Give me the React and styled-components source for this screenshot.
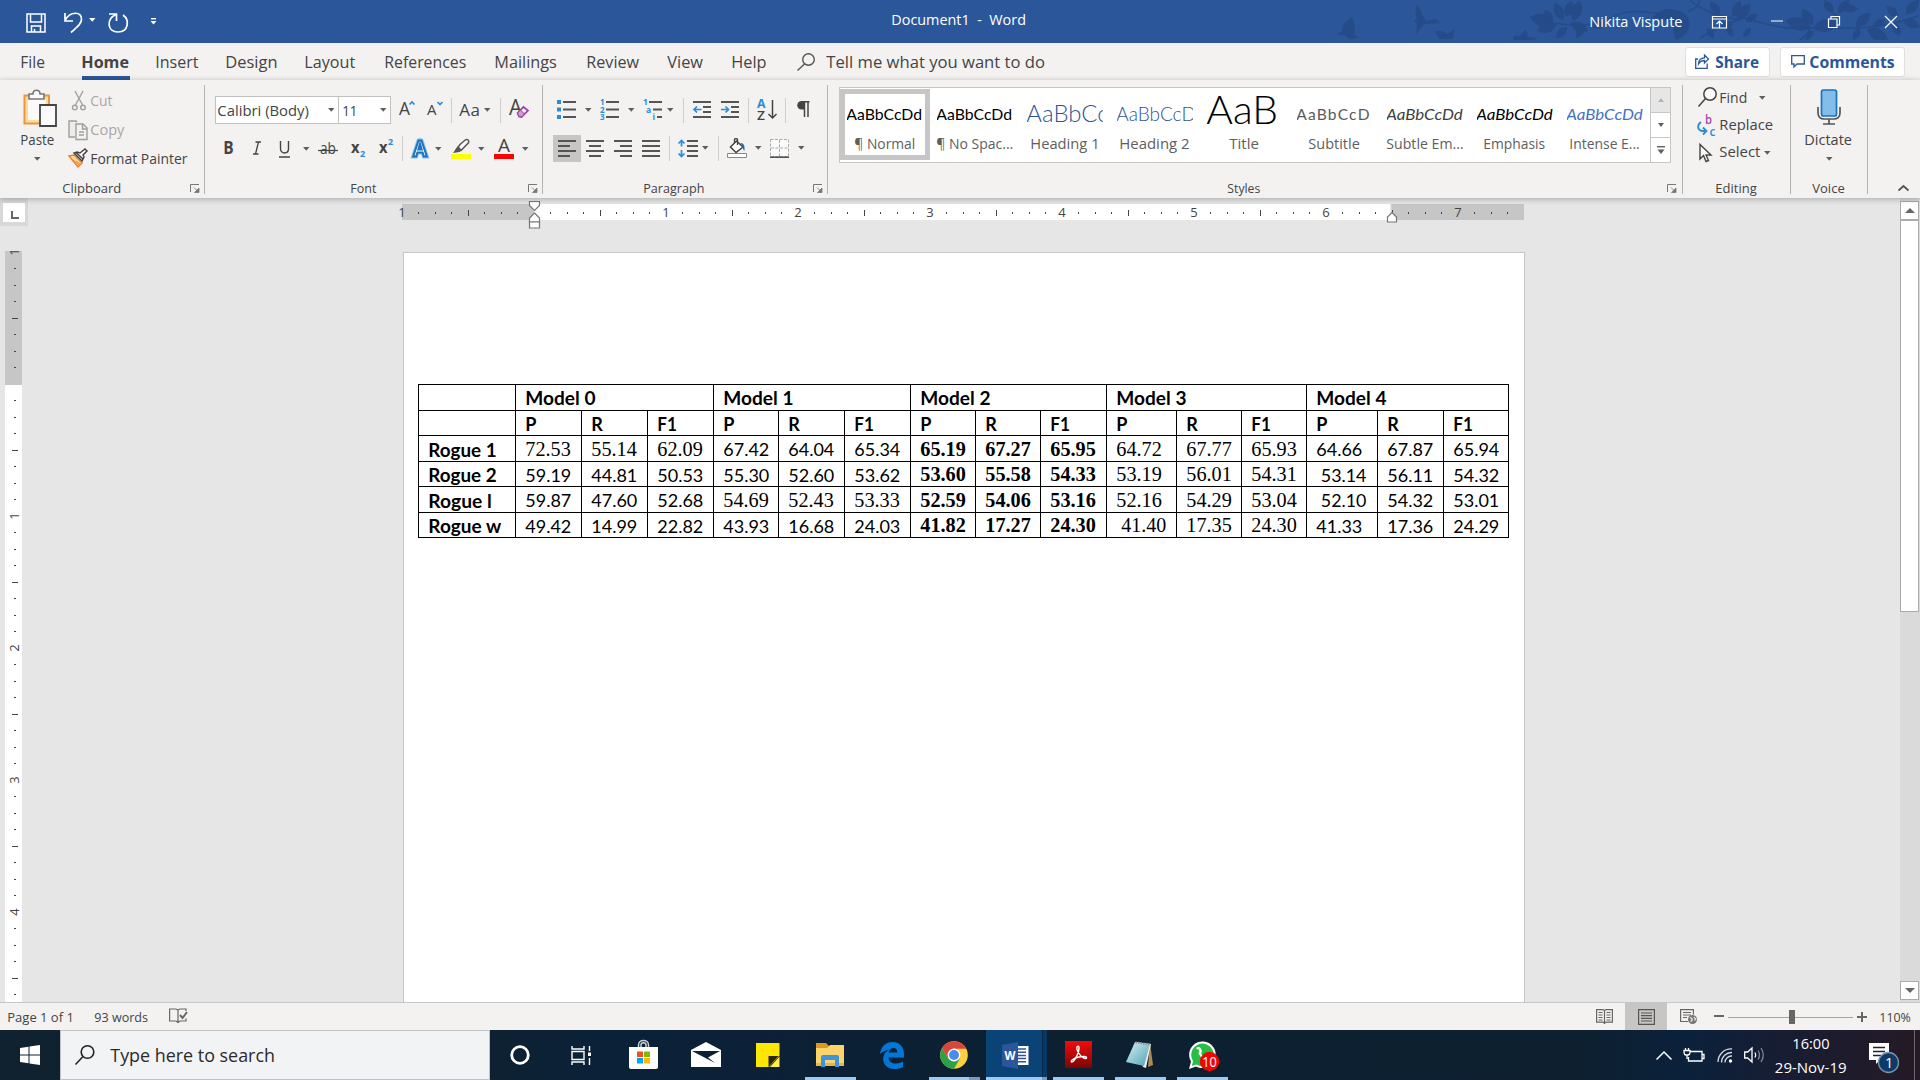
import React, { useLayoutEffect, useRef, useState } from 'react';
import styled, { createGlobalStyle, css } from 'styled-components';

const ui = '"Open Sans", "Noto Sans", sans-serif';
const calibri = 'Lato, "Open Sans", sans-serif';
const times = '"Liberation Serif", serif';

const Global = createGlobalStyle`
  * { box-sizing: border-box; }
  body { margin: 0; overflow: hidden; background: #e6e6e6; font-family: ${ui}; color: #444; }
  svg { display: block; overflow: visible; }
`;

/* ---------- text that keeps a fixed measure ---------- */
const Measure = styled.div`
  flex: none;
  width: ${(p) => p.$w}px;
  margin-left: ${(p) => p.$ml || 0}px;
  margin-top: ${(p) => p.$mt || 0}px;
  font-family: ${(p) => p.$font || 'inherit'};
  font-size: ${(p) => p.$size || 14.5}px;
  font-weight: ${(p) => p.$weight || 400};
  font-style: ${(p) => (p.$italic ? 'italic' : 'normal')};
  letter-spacing: ${(p) => p.$ls || 0}px;
  color: ${(p) => p.$color || 'inherit'};
  line-height: 1.3;
  white-space: pre;
`;
const MeasureText = styled.span`
  display: inline-block;
  transform-origin: 0 50%;
`;
function Fit({ w, ml, mt, font, size, weight, italic, ls, color, children }) {
  const ref = useRef(null);
  const [scale, setScale] = useState(1);
  useLayoutEffect(() => {
    setScale(w / ref.current.offsetWidth);
  }, [w]);
  return (
    <Measure $w={w} $ml={ml} $mt={mt} $font={font} $size={size} $weight={weight} $italic={italic} $ls={ls} $color={color}>
      <MeasureText ref={ref} style={{ transform: `translateX(-0.7px) scaleX(${scale})` }}>{children}</MeasureText>
    </Measure>
  );
}

const Glyph = styled.svg.attrs((p) => ({
  width: p.$w,
  height: p.$h,
  viewBox: `0 0 ${p.$w} ${p.$h}`,
  fill: 'none',
}))`
  flex: none;
  margin-left: ${(p) => p.$ml || 0}px;
  margin-top: ${(p) => p.$mt || 0}px;
  text { font-family: ${ui}; }
`;
const Caret = ({ ml, mt, color = '#605e5c' }) => (
  <Glyph $w={7} $h={4} $ml={ml} $mt={mt}><path d="M0 0h6.500L3.250 3.800z" fill={color} /></Glyph>
);

const Screen = styled.div`
  width: 1920px;
  height: 1080px;
  display: flex;
  flex-direction: column;
  overflow: hidden;
`;

/* ---------- title bar ---------- */
const TitleBar = styled.header`
  position: relative;
  z-index: 0;
  flex: none;
  height: 43px;
  display: flex;
  align-items: center;
  background: #2b579a;
  color: #fff;
`;
const Foliage = styled.svg`
  position: absolute;
  z-index: -1;
  right: 0;
  top: 0;
  && { overflow: hidden; }
`;
/* each leaf: base x, base y, tip x, tip y */
const leaves = [
  [1553, 23, 1530, 17], [1557, 24, 1537, 31], [1563, 20, 1555, 3], [1573, 21, 1580, 1], [1567, 27, 1556, 38], [1570, 23, 1588, 31],
  [1566, 17, 1572, 1], [1553, 22, 1544, 10], [1590, 26, 1606, 24], [1576, 38, 1584, 27],
  [1720, 14, 1710, 2], [1733, 17, 1740, 1], [1737, 20, 1750, 4], [1733, 25, 1720, 24], [1743, 37, 1751, 28], [1727, 26, 1733, 37],
  [1714, 38, 1707, 28], [1746, 22, 1757, 14],
  [1811, 28, 1786, 20], [1813, 25, 1802, 9], [1813, 28, 1838, 23], [1813, 30, 1806, 40], [1833, 13, 1824, 0], [1838, 13, 1849, 0],
  [1856, 27, 1870, 13], [1860, 28, 1853, 40], [1867, 29, 1888, 40], [1873, 27, 1885, 19], [1898, 17, 1887, 6], [1903, 20, 1920, 27],
  [1906, 14, 1919, 0], [1893, 22, 1900, 36], [1842, 8, 1858, 9],
];
const leafPath = ([x1, y1, x2, y2]) => {
  const mx = (x1 + x2) / 2;
  const my = (y1 + y2) / 2;
  const dx = (y2 - y1) * 0.5;
  const dy = (x1 - x2) * 0.5;
  return `M${x1} ${y1}Q${mx + dx} ${my + dy} ${x2} ${y2}Q${mx - dx} ${my - dy} ${x1} ${y1}z`;
};

/* ---------- tabs ---------- */
const TabBar = styled.nav`
  flex: none;
  height: 37px;
  display: flex;
  align-items: center;
  background: #f3f2f1;
`;
const Tab = styled.div`
  height: 36px;
  margin-left: ${(p) => p.$ml}px;
  display: flex;
  align-items: center;
  border-bottom: 4px solid ${(p) => (p.$active ? '#2b579a' : 'transparent')};
  padding-top: 4px;
`;
const ActionButton = styled.div`
  flex: none;
  width: ${(p) => p.$w}px;
  height: 30px;
  margin-left: ${(p) => p.$ml}px;
  display: flex;
  align-items: center;
  background: #fff;
  border: 1px solid #e1dfdd;
  border-radius: 3px;
`;

/* ---------- ribbon ---------- */
const Ribbon = styled.div`
  flex: none;
  height: 118px;
  padding: 5px 0 4px;
  display: flex;
  background: #f3f2f1;
  position: relative;
  z-index: 1;
  box-shadow: 0 1px 6px rgba(0, 0, 0, 0.28);
`;
const Group = styled.section`
  flex: none;
  width: ${(p) => p.$w}px;
  display: flex;
  flex-direction: column;
  border-right: 1px solid ${(p) => (p.$last ? 'transparent' : '#b5b3b1')};
`;
const GroupBody = styled.div`
  flex: 1;
  display: flex;
  padding-top: ${(p) => p.$pt || 0}px;
  flex-direction: ${(p) => (p.$rows ? 'column' : 'row')};
`;
const GroupFooter = styled.div`
  flex: none;
  height: 13px;
  display: flex;
  align-items: center;
`;
const GroupName = ({ w, ml, children }) => <Fit w={w} ml={ml} mt={2} size={13}>{children}</Fit>;
const Launcher = ({ ml }) => (
  <Glyph $w={10} $h={9} $ml={ml} $mt={2}>
    <path d="M.5 8V.5H9" stroke="#777" />
    <path d="M4 3.500l4 4M9 4v4.500H4.500z" stroke="#777" fill="#777" strokeWidth=".8" />
  </Glyph>
);
const Row = styled.div`
  flex: none;
  height: ${(p) => p.$h}px;
  display: flex;
  align-items: center;
`;
const Column = styled.div`
  flex: none;
  width: ${(p) => p.$w}px;
  margin-left: ${(p) => p.$ml || 0}px;
  display: flex;
  flex-direction: column;
  align-items: ${(p) => p.$align || 'stretch'};
`;
const Divider = styled.i`
  flex: none;
  width: 1px;
  height: 25px;
  margin-left: ${(p) => p.$ml}px;
  background: #d0cecc;
`;
const Combo = styled.div`
  flex: none;
  width: ${(p) => p.$w}px;
  height: 28px;
  margin-left: ${(p) => p.$ml}px;
  display: flex;
  align-items: center;
  background: #fff;
  border: 1px solid #c3c1bf;
`;
const Pressed = styled.div`
  flex: none;
  width: 28px;
  height: 27px;
  margin-left: 10px;
  display: flex;
  align-items: center;
  justify-content: center;
  background: #c8c6c4;
`;

const Gallery = styled.div`
  width: 832px;
  height: 76px;
  margin: 2px 0 0 11px;
  display: flex;
  background: #fff;
  border: 1px solid #c8c6c4;
`;
const StyleCard = styled.div`
  flex: none;
  width: 90px;
  height: 71px;
  margin-top: 1px;
  border: 5px solid ${(p) => (p.$selected ? '#c6c6c6' : 'transparent')};
  display: flex;
  flex-direction: column;
  align-items: center;
`;
const Sample = styled.div`
  flex: none;
  width: 76px;
  height: 36px;
  margin-top: 2px;
  display: flex;
  align-items: center;
  overflow: hidden;
`;
const GalleryButtons = styled.div`
  width: 20px;
  margin-left: auto;
  display: grid;
  grid-template-rows: 25px 25px 24px;
  border-left: 1px solid #c8c6c4;
`;
const GalleryButton = styled.div`
  display: flex;
  flex-direction: column;
  align-items: center;
  justify-content: center;
  gap: 2px;
  background: ${(p) => (p.$off ? '#e6e6e6' : '#fff')};
  ${(p) => !p.$end && css`border-bottom: 1px solid #c8c6c4;`}
`;

const Lines = ({ rows, color = '#555', sw = 2 }) =>
  rows.map(([x1, x2, y], i) => <path key={i} d={`M${x1} ${y}H${x2}`} stroke={color} strokeWidth={sw} />);

function Clipboard() {
  return (
    <Group $w={205}>
      <GroupBody $pt={1}>
        <Column $ml={19} $w={37} $align="center">
          <Glyph $w={34} $h={38} $mt={3} $ml={4}>
            <path d="M1.500 6.500H26v28H1.500z" fill="#fbdc9c" stroke="#f0953f" strokeWidth="2" />
            <path d="M5 10h18v21H5z" fill="#fafafa" />
            <path d="M6 10V5h4c0-5 7-5 7 0h4v5z" fill="#fafafa" stroke="#777" strokeWidth="1.600" />
            <path d="M17 16h16v21H17z" fill="#fafafa" stroke="#444" strokeWidth="1.800" />
          </Glyph>
          <Fit w={34} mt={4}>Paste</Fit>
          <Caret mt={7} />
        </Column>
        <Column $ml={12} $w={130}>
          <Row $h={29}>
            <Glyph $w={14} $h={20} $ml={4} stroke="#a6a4a2" strokeWidth="1.500">
              <path d="M3 0l7.500 14M11 0L3.500 14" /><circle cx="2.800" cy="16.500" r="2.300" /><circle cx="11" cy="16.500" r="2.300" />
            </Glyph>
            <Fit w={22} ml={5} mt={2} color="#a9a7a5">Cut</Fit>
          </Row>
          <Row $h={29}>
            <Glyph $w={20} $h={20} stroke="#a09e9c" strokeWidth="1.400">
              <path d="M7 17H1V1h7l1 1" fill="#ececec" /><path d="M8 4h7l4 4v11.500H8z" fill="#f3f2f1" /><path d="M14.500 4.500V9H19M11 12h5M11 15h5" />
            </Glyph>
            <Fit w={34} ml={3} mt={2} color="#a9a7a5">Copy</Fit>
          </Row>
          <Row $h={29}>
            <Glyph $w={20} $h={19} $mt={-3}>
              <path d="M1 8l5-1 8 8-4 4z" fill="#fbdc9c" stroke="#ee8130" strokeWidth="1.500" />
              <path d="M5 12l6 5M8 13l4 3" stroke="#ee8130" />
              <path d="M6 5l8 8 2-4-1-2 4-4-2-2-5 4-3-1z" fill="#fff" stroke="#444" strokeWidth="1.500" />
              <path d="M8 4.500l7 6.500" stroke="#444" strokeWidth="1.600" />
            </Glyph>
            <Fit w={97} ml={3} mt={2}>Format Painter</Fit>
          </Row>
        </Column>
      </GroupBody>
      <GroupFooter><GroupName w={59} ml={63}>Clipboard</GroupName><Launcher ml={68} /></GroupFooter>
    </Group>
  );
}

function FontGroup() {
  return (
    <Group $w={338}>
      <GroupBody $rows $pt={6}>
        <Row $h={38}>
          <Combo $w={124} $ml={10}><Fit w={92} ml={2} mt={1} size={15}>Calibri (Body)</Fit><Caret ml={18} /></Combo>
          <Combo $w={53} $ml={-1}><Fit w={15} ml={4} mt={1} size={15}>11</Fit><Caret ml={22} /></Combo>
          <Glyph $w={16} $h={18} $ml={8} $mt={-2}>
            <text x="0" y="15" fontSize="17.500" textLength="11" lengthAdjust="spacingAndGlyphs" fill="#444">A</text>
            <path d="M10.500 4.500L13 2l2.500 2.500" stroke="#2a8dd4" strokeWidth="1.700" />
          </Glyph>
          <Glyph $w={16} $h={18} $ml={12} $mt={-2}>
            <text x="0" y="15" fontSize="15" textLength="9.500" lengthAdjust="spacingAndGlyphs" fill="#444">A</text>
            <path d="M10.500 2L13 4.500 15.500 2" stroke="#2a8dd4" strokeWidth="1.700" />
          </Glyph>
          <Divider $ml={8} />
          <Fit w={21} ml={8} size={17} ls={0.5}>Aa</Fit>
          <Caret ml={3} />
          <Divider $ml={9} />
          <Glyph $w={20} $h={20} $ml={8} $mt={-3}>
            <text x="0" y="16" fontSize="21" textLength="13" lengthAdjust="spacingAndGlyphs" fill="#444">A</text>
            <path d="M8.500 14l6-6 4.500 3.500-6.500 6.500-2.500-.5z" fill="#f3f2f1" stroke="#9b3fa5" strokeWidth="1.700" />
            <path d="M8.500 14l3-3 4 4-3 3-2.500-.5z" fill="#cf9ad4" stroke="#9b3fa5" />
          </Glyph>
        </Row>
        <Row $h={38}>
          <Fit w={10} ml={19} size={17} weight={700}>B</Fit>
          <Glyph $w={8} $h={14} $ml={19} stroke="#444" strokeWidth="1.300"><path d="M2.500 1H8M0 13h5.500M5.500 1L2.500 13" /></Glyph>
          <Glyph $w={11} $h={17} $ml={18} $mt={2} stroke="#444" strokeWidth="1.400"><path d="M1.500 0v7.500c0 6 8 6 8 0V0M0 16h11" /></Glyph>
          <Caret ml={13} mt={2} />
          <Glyph $w={20} $h={18} $ml={8}>
            <text x="2" y="15" fontSize="15.500" textLength="16" lengthAdjust="spacingAndGlyphs" fill="#444">ab</text>
            <path d="M0 11.500h20" stroke="#444" strokeWidth="1.200" />
          </Glyph>
          <Glyph $w={14} $h={22} $ml={13}>
            <text x="0" y="15.500" fontSize="16" fontWeight="700" textLength="8.500" lengthAdjust="spacingAndGlyphs" fill="#444">x</text>
            <text x="9" y="20" fontSize="9" fontWeight="700" fill="#2a8dd4">2</text>
          </Glyph>
          <Glyph $w={14} $h={22} $ml={14}>
            <text x="0" y="15.500" fontSize="16" fontWeight="700" textLength="8.500" lengthAdjust="spacingAndGlyphs" fill="#444">x</text>
            <text x="9" y="7.500" fontSize="9" fontWeight="700" fill="#2a8dd4">2</text>
          </Glyph>
          <Divider $ml={9} />
          <Glyph $w={18} $h={19} $ml={8}>
            <path d="M2.200 17.500L7.500 1.500h3l5.300 16h-3l-1.200-4H6.400l-1.200 4zM7.300 10.500h3.400L9 4.800z" fill="#cfe6f7" stroke="#8cc3ea" strokeWidth="4" />
            <path d="M2.200 17.500L7.500 1.500h3l5.300 16h-3l-1.200-4H6.400l-1.200 4zM7.300 10.500h3.400L9 4.800z" fill="#fff" stroke="#1a73bd" strokeWidth="2" />
          </Glyph>
          <Caret ml={6} mt={2} />
          <Glyph $w={20} $h={20} $ml={9} $mt={1}>
            <path d="M5 11l4-5.500L14.500.8c2-1 4 .7 3 3L10 11.500z" fill="#fff" stroke="#555" strokeWidth="1.500" />
            <path d="M7 7l4 4-2.500 2L2 14z" fill="#555" />
            <path d="M0 15h20v5H0z" fill="#ff0" />
          </Glyph>
          <Caret ml={7} mt={2} />
          <Glyph $w={20} $h={20} $ml={9} $mt={1}>
            <text x="4" y="13" fontSize="18" textLength="12" lengthAdjust="spacingAndGlyphs" fill="#444">A</text>
            <path d="M0 15h20v5H0z" fill="#f00" />
          </Glyph>
          <Caret ml={8} mt={2} />
        </Row>
      </GroupBody>
      <GroupFooter><GroupName w={26} ml={146}>Font</GroupName><Launcher ml={151} /></GroupFooter>
    </Group>
  );
}

function Paragraph() {
  return (
    <Group $w={285}>
      <GroupBody $rows $pt={6}>
        <Row $h={38}>
          <Glyph $w={19} $h={20} $ml={14} $mt={-3}>
            <path d="M0 1h4v4H0zM0 8.500h4v4H0zM0 16h4v4H0z" fill="#2a8dd4" />
            <Lines rows={[[6, 19, 3], [6, 19, 10.5], [6, 19, 18]]} />
          </Glyph>
          <Caret ml={9} />
          <Glyph $w={19} $h={20} $ml={8} $mt={-3}>
            <g fill="#2a8dd4" fontSize="8" fontWeight="700"><text x="0" y="6">1</text><text x="0" y="13.500">2</text><text x="0" y="21">3</text></g>
            <Lines rows={[[6, 19, 3], [6, 19, 10.5], [6, 19, 18]]} />
          </Glyph>
          <Caret ml={9} />
          <Glyph $w={19} $h={20} $ml={8} $mt={-3}>
            <g fill="#2a8dd4" fontSize="8.500" fontWeight="700"><text x="0" y="6">1</text><text x="3" y="13.500">a</text><text x="9.500" y="21">i</text></g>
            <Lines rows={[[6, 19, 3], [10, 19, 10.5], [14, 19, 18]]} />
          </Glyph>
          <Caret ml={5} />
          <Divider $ml={9} />
          <Glyph $w={18} $h={18} $ml={9} $mt={-3}>
            <Lines rows={[[0, 18, 2], [10, 18, 7], [10, 18, 12], [0, 18, 17]]} />
            <path d="M8.500 9.500H1M4 6.500l-3 3 3 3" stroke="#2a8dd4" strokeWidth="1.700" />
          </Glyph>
          <Glyph $w={18} $h={18} $ml={10} $mt={-3}>
            <Lines rows={[[0, 18, 2], [10, 18, 7], [10, 18, 12], [0, 18, 17]]} />
            <path d="M0 9.500h7.500M4.500 6.500l3 3-3 3" stroke="#2a8dd4" strokeWidth="1.700" />
          </Glyph>
          <Divider $ml={9} />
          <Glyph $w={20} $h={22} $ml={8}>
            <text x="0" y="8.500" fontSize="12" fontWeight="700" fill="#2a8dd4" textLength="8.500" lengthAdjust="spacingAndGlyphs">A</text>
            <text x="0" y="21" fontSize="12" fontWeight="600" fill="#444" textLength="8" lengthAdjust="spacingAndGlyphs">Z</text>
            <path d="M15.500 1v18M11.500 15l4 4 4-4" stroke="#444" strokeWidth="1.500" />
          </Glyph>
          <Divider $ml={8} />
          <Glyph $w={13} $h={16} $ml={11} $mt={-3}>
            <path d="M12.500.7H6M7.500 1v15M11 1v15" stroke="#444" strokeWidth="1.500" />
            <path d="M7.500 0v8.500H4.500a4.200 4.200 0 010-8.500z" fill="#444" />
          </Glyph>
        </Row>
        <Row $h={38}>
          <Pressed><Glyph $w={18} $h={17}><Lines rows={[[0, 18, 1], [0, 12, 6], [0, 18, 11], [0, 12, 16]]} /></Glyph></Pressed>
          <Glyph $w={18} $h={17} $ml={5}><Lines rows={[[0, 18, 1], [3, 15, 6], [0, 18, 11], [3, 15, 16]]} /></Glyph>
          <Glyph $w={18} $h={17} $ml={10}><Lines rows={[[0, 18, 1], [6, 18, 6], [0, 18, 11], [6, 18, 16]]} /></Glyph>
          <Glyph $w={18} $h={17} $ml={10}><Lines rows={[[0, 18, 1], [0, 18, 6], [0, 18, 11], [0, 18, 16]]} /></Glyph>
          <Divider $ml={9} />
          <Glyph $w={20} $h={19} $ml={8}>
            <path d="M3.500 1.500v6M.5 4.500l3-3 3 3M3.500 11v6.500M.5 14.500l3 3 3-3" stroke="#2a8dd4" strokeWidth="1.700" />
            <Lines rows={[[9, 20, 2], [9, 20, 7], [9, 20, 12], [9, 20, 17]]} />
          </Glyph>
          <Caret ml={4} />
          <Divider $ml={9} />
          <Glyph $w={20} $h={20} $ml={8}>
            <path d="M9.500 3L16 9l-7 5.500L3.500 9z" fill="#fff" stroke="#444" strokeWidth="1.500" />
            <path d="M7.500 5V1.500c0-1 3-1 3 0V7" stroke="#444" strokeWidth="1.300" />
            <path d="M13.500 5c3 0 4.500 2 4 8-1.500-1-1.500-3-2-5z" fill="#1a73bd" />
            <path d="M.5 15.500h19v4H.5z" fill="#fff" stroke="#888" />
          </Glyph>
          <Caret ml={8} />
          <Glyph $w={19} $h={19} $ml={8}>
            <path d="M.5.500h18v17H.5z" fill="#fafafa" stroke="#aaa" strokeDasharray="3 1.500" />
            <path d="M9.500 1v17M1 9h17" stroke="#aaa" strokeDasharray="3 1.500" />
            <path d="M0 18.200h19" stroke="#555" strokeWidth="1.600" />
          </Glyph>
          <Caret ml={9} />
        </Row>
      </GroupBody>
      <GroupFooter><GroupName w={61} ml={101}>Paragraph</GroupName><Launcher ml={108} /></GroupFooter>
    </Group>
  );
}

const styleCards = [
  { name: '¶ Normal', w: 61, color: '#000', selected: true },
  { name: '¶ No Spac...', w: 77, color: '#000' },
  { name: 'Heading 1', w: 69, color: '#2f5496', text: 'AaBbCc', tw: 82, size: 22.5, weight: 300 },
  { name: 'Heading 2', w: 70, color: '#2f5496', text: 'AaBbCcD', tw: 80, size: 19, weight: 300 },
  { name: 'Title', w: 30, color: '#000', text: 'AaB', tw: 72, size: 39, weight: 300, mt: -10 },
  { name: 'Subtitle', w: 52, color: '#5a5a5a', text: 'AaBbCcD', tw: 74, ls: 1.2 },
  { name: 'Subtle Em...', w: 77, color: '#404040', italic: true },
  { name: 'Emphasis', w: 62, color: '#000', italic: true },
  { name: 'Intense E...', w: 70, color: '#4472c4', italic: true },
];

function Styles() {
  return (
    <Group $w={855}>
      <GroupBody>
        <Gallery>
          {styleCards.map((s) => (
            <StyleCard key={s.name} $selected={s.selected}>
              <Sample>
                <Fit w={s.tw || 76} mt={s.mt} font={calibri} size={s.size || 16} weight={s.weight} italic={s.italic} ls={s.ls} color={s.color}>
                  {s.text || 'AaBbCcDd'}
                </Fit>
              </Sample>
              <Fit w={s.w} mt={3} color="#605e5c">{s.name}</Fit>
            </StyleCard>
          ))}
          <GalleryButtons>
            <GalleryButton $off><Glyph $w={6} $h={4}><path d="M0 4h6L3 0z" fill="#b5b3b1" /></Glyph></GalleryButton>
            <GalleryButton><Glyph $w={6} $h={4}><path d="M0 0h6L3 4z" fill="#605e5c" /></Glyph></GalleryButton>
            <GalleryButton $end><Glyph $w={8} $h={8}><path d="M0 .7h8" stroke="#605e5c" strokeWidth="1.400" /><path d="M.5 3.500h7L4 8z" fill="#605e5c" /></Glyph></GalleryButton>
          </GalleryButtons>
        </Gallery>
      </GroupBody>
      <GroupFooter><GroupName w={33} ml={400}>Styles</GroupName><Launcher ml={406} /></GroupFooter>
    </Group>
  );
}

function Editing() {
  return (
    <Group $w={108}>
      <GroupBody $rows>
        <Row $h={27}>
          <Glyph $w={19} $h={20} $ml={15} $mt={-3} stroke="#444" strokeWidth="1.500"><circle cx="12" cy="7" r="6.200" fill="#fafafa" /><path d="M7.500 11.500L.5 19.500" /></Glyph>
          <Fit w={28} ml={3} mt={-1}>Find</Fit><Caret ml={11} mt={-1} />
        </Row>
        <Row $h={27}>
          <Glyph $w={19} $h={20} $ml={14}>
            <text x="8" y="8" fontSize="12" fontWeight="600" fill="#a846b0" textLength="7" lengthAdjust="spacingAndGlyphs">b</text>
            <text x="12.500" y="20" fontSize="12" fontWeight="600" fill="#2a8dd4" textLength="6" lengthAdjust="spacingAndGlyphs">c</text>
            <path d="M4 6C0 9 0 14 5 15h4M6 11.500L9.500 15 6 18.500" stroke="#2a8dd4" strokeWidth="1.800" />
          </Glyph>
          <Fit w={54} ml={4}>Replace</Fit>
        </Row>
        <Row $h={27}>
          <Glyph $w={13} $h={20} $ml={16} stroke="#444" strokeWidth="1.400"><path d="M1 1.500v14.500l3.500-3.500 2.500 6 2.500-1-2.500-5.500h5z" fill="#fafafa" /></Glyph>
          <Fit w={41} ml={8}>Select</Fit><Caret ml={3} />
        </Row>
      </GroupBody>
      <GroupFooter><GroupName w={41} ml={33}>Editing</GroupName></GroupFooter>
    </Group>
  );
}

function Voice() {
  return (
    <Group $w={77}>
      <GroupBody>
        <Column $w={76} $align="center">
          <Glyph $w={24} $h={36} $mt={4} $ml={-1}>
            <rect x="4.500" y="1" width="15" height="26" rx="2" fill="#83bdea" stroke="#1a73bd" strokeWidth="1.700" />
            <path d="M1 18v6c0 4 3 6 6 6h10c3 0 6-2 6-6v-6M12 30v5M6 35h12" stroke="#555" strokeWidth="1.700" />
          </Glyph>
          <Fit w={48} mt={6}>Dictate</Fit>
          <Caret mt={7} />
        </Column>
      </GroupBody>
      <GroupFooter><GroupName w={32} ml={22}>Voice</GroupName></GroupFooter>
    </Group>
  );
}

/* ---------- workspace ---------- */
const Workspace = styled.main`
  flex: 1;
  min-height: 0;
  display: flex;
  background: #e6e6e6;
`;
const LeftGutter = styled.div`
  flex: none;
  width: 28px;
`;
const TabSelector = styled.div`
  width: 28px;
  height: 28px;
  padding: 5px 0 0 3px;
  background: #d8d8d8;
`;
const TabSelectorFace = styled.div`
  width: 22px;
  height: 19px;
  padding: 8px 0 0 8px;
  background: #fff;
`;
const Canvas = styled.div`
  flex: 1;
  min-width: 0;
  display: flex;
  flex-direction: column;
`;
const Page = styled.article`
  width: 1122px;
  flex: 1;
  margin: 24px 0 0 375px;
  padding: 131px 0 0 14px;
  background: #fff;
  border: 1px solid #c6c6c6;
  border-bottom: 0;
`;
const Scrollbar = styled.div`
  flex: none;
  width: 20px;
  padding: 3px 1px 2px 0;
  display: flex;
  flex-direction: column;
  background: #dadada;
`;
const ScrollButton = styled.div`
  flex: none;
  height: 19px;
  display: flex;
  align-items: center;
  justify-content: center;
  background: #fff;
  border: 1px solid #ababab;
`;
const ScrollThumb = styled.div`
  height: 392px;
  margin: 0 0 auto;
  background: #fff;
  border: 1px solid #ababab;
`;

const INCH = 132;
const eighths = (from, to) => Array.from({ length: to - from + 1 }, (_, i) => from + i);

function HorizontalRuler() {
  const zero = 138;
  return (
    <Glyph $w={1134} $h={30} $ml={368}>
      <rect x="6" y="6" width="132" height="16" fill="#c6c6c6" />
      <rect x="138" y="6" width="856" height="16" fill="#fff" />
      <rect x="995.500" y="6" width="132.500" height="16" fill="#c6c6c6" />
      {eighths(-8, 59).map((n) => {
        const x = Math.floor(zero + (n * INCH) / 8);
        if (n === 0) return null;
        if (n % 8 === 0)
          return <text key={n} x={x} y="19" fontSize="13" fill="#444" textAnchor="middle">{Math.abs(n / 8)}</text>;
        const tall = n % 4 === 0;
        return <rect key={n} x={x} y={tall ? 12 : 14} width="1" height={tall ? 6 : 2} fill="#444" />;
      })}
      <g fill="#fff" stroke="#777" strokeWidth="1.200">
        <path d="M133.500 3.500h10v4l-5 5-5-5z" /><path d="M138.500 15l5 5v4h-10v-4z" /><path d="M133.500 24h10v6h-10z" />
        <path d="M996 14.500l4.500 4.500v5h-9v-5z" />
      </g>
    </Glyph>
  );
}

function VerticalRuler() {
  const zero = 133;
  return (
    <Glyph $w={17} $h={750} $ml={5} $mt={25}>
      <rect width="17" height="134" fill="#c6c6c6" />
      <rect y="134" width="17" height="617" fill="#fff" />
      {eighths(-8, 37).map((n) => {
        const y = Math.floor(zero + (n * INCH) / 8);
        if (n === 0) return null;
        if (n % 8 === 0)
          return (
            <text key={n} transform={`translate(14 ${y}) rotate(-90)`} fontSize="13" fill="#444" textAnchor="middle">{Math.abs(n / 8)}</text>
          );
        const tall = n % 4 === 0;
        return <rect key={n} x={tall ? 7 : 9} y={y} width={tall ? 6 : 2} height="1" fill="#444" />;
      })}
    </Glyph>
  );
}

/* ---------- results table ---------- */
const Table = styled.div`
  width: 1091px;
  display: grid;
  grid-template-columns: 97px 66px 66px 66px 65px 66px 66px 65px 65px 66px 70px 65px 65px 71px 66px 65px;
  grid-template-rows: 26px 25px 26px 25px 26px 25px;
  border: solid #000;
  border-width: 1px 0 0 1px;
  color: #000;
`;
const Cell = styled.div`
  grid-column: span ${(p) => p.$span || 1};
  display: flex;
  align-items: center;
  padding: ${(p) => p.$pt || 0}px 0 0 10px;
  border: solid #000;
  border-width: 0 1px 1px 0;
`;
/* one face letter per value: c = Calibri, s = Times, b = Times bold */
const results = [
  ['Rogue 1', 68, 'ssscccbbbsssccc', ['72.53', '55.14', '62.09', '67.42', '64.04', '65.34', '65.19', '67.27', '65.95', '64.72', '67.77', '65.93', '64.66', '67.87', '65.94']],
  ['Rogue 2', 68, 'ccccccbbbsssccc', ['59.19', '44.81', '50.53', '55.30', '52.60', '53.62', '53.60', '55.58', '54.33', '53.19', '56.01', '54.31', ' 53.14', '56.11', '54.32']],
  ['Rogue l', 63, 'cccsssbbbsssccc', ['59.87', '47.60', '52.68', '54.69', '52.43', '53.33', '52.59', '54.06', '53.16', '52.16', '54.29', '53.04', ' 52.10', '54.32', '53.01']],
  ['Rogue w', 73, 'ccccccbbbsssccc', ['49.42', '14.99', '22.82', '43.93', '16.68', '24.03', '41.82', '17.27', '24.30', ' 41.40', '17.35', '24.30', '41.33', '17.36', '24.29']],
];

const Heading = ({ w, children }) => <Fit w={w} font={calibri} size={18} weight={700}>{children}</Fit>;

function ResultsTable() {
  return (
    <Table>
      <Cell />
      {[0, 1, 2, 3, 4].map((m) => (
        <Cell key={m} $span={3} $pt={3}><Heading w={70}>{`Model ${m}`}</Heading></Cell>
      ))}
      <Cell />
      {[0, 1, 2, 3, 4].flatMap((m) =>
        [['P', 11], ['R', 12], ['F1', 20]].map(([t, w]) => (
          <Cell key={m + t} $pt={4}><Heading w={w}>{t}</Heading></Cell>
        ))
      )}
      {results.map(([name, w, faces, values]) => (
        <React.Fragment key={name}>
          <Cell $pt={4}><Heading w={w}>{name}</Heading></Cell>
          {values.map((v, i) => {
            const serif = faces[i] !== 'c';
            return (
              <Cell key={i} $pt={serif ? 0 : 3}>
                <Fit w={(serif ? 45.5 : 46) + (v.length > 5 ? 4.5 : 0)} font={serif ? times : calibri} size={serif ? 20 : 18} weight={faces[i] === 'b' ? 700 : 400}>{v}</Fit>
              </Cell>
            );
          })}
        </React.Fragment>
      ))}
    </Table>
  );
}

/* ---------- status bar ---------- */
const StatusBar = styled.footer`
  flex: none;
  height: 28px;
  display: flex;
  align-items: center;
  background: #f3f2f1;
  border-top: 1px solid #c6c6c6;
`;
const ViewButton = styled.div`
  flex: none;
  width: 42px;
  height: 27px;
  margin-left: 12px;
  display: flex;
  align-items: center;
  justify-content: center;
  background: #c8c6c4;
`;
const Push = styled.div`flex: 1;`;

/* ---------- taskbar ---------- */
const Taskbar = styled.div`
  flex: none;
  height: 50px;
  display: flex;
  align-items: center;
  color: #fff;
  background: linear-gradient(90deg, #10212f 0%, #0f2130 22%, #0b2138 32%, #0d2032 58%, #0e2030 82%, #0b213b 88%, #1a1c30 94%, #251a26 100%);
`;
const SearchBox = styled.div`
  flex: none;
  width: 430px;
  height: 50px;
  display: flex;
  align-items: center;
  background: #f2f3f5;
  border: 1px solid #bfc1c4;
  color: #2b2b2b;
`;
const StartButton = styled.div`
  flex: none;
  width: 60px;
  display: flex;
  justify-content: center;
`;
const TaskTile = styled.div`
  flex: none;
  width: ${(p) => p.$w || 62}px;
  height: 50px;
  display: flex;
  flex-direction: column;
  align-items: center;
`;
const TileFace = styled.div`
  flex: 1;
  width: ${(p) => (p.$active ? 61 : 56)}px;
  padding-top: 3px;
  display: flex;
  align-items: center;
  justify-content: center;
  ${(p) => p.$active && css`background: linear-gradient(90deg, #0a4376 0 56px, #06284a 56px 57px, #093862 57px);`}
`;
const Indicator = styled.div`
  height: 3px;
  width: ${(p) => (p.$active ? 61 : 51)}px;
  background: ${(p) => (p.$stacked ? `linear-gradient(90deg, #9bcbf3 0 ${p.$stacked}px, #7a9ab5 ${p.$stacked}px)` : p.$on ? '#9bcbf3' : 'transparent')};
`;
const Clock = styled.div`
  width: 71px;
  margin-left: 12px;
  height: 44px;
  display: flex;
  flex-direction: column;
  align-items: center;
  justify-content: space-between;
`;
const ShowDesktop = styled.div`
  width: 6px;
  height: 50px;
  margin-left: 13px;
  border-left: 1px solid #6c6570;
`;

const tiles = [
  { key: 'cortana', w: 61, icon: <Glyph $w={20} $h={20} $ml={-1}><circle cx="10" cy="10" r="8.300" stroke="#fff" strokeWidth="2.800" /></Glyph> },
  {
    key: 'taskview', icon: (
      <Glyph $w={20} $h={19} $ml={-3} stroke="#fff" strokeWidth="1.400">
        <path d="M1 0v3h12V0M1 19v-3h12v3M1 5.500h12v8H1zM18.500 0v5M18.500 12v7" /><path d="M17 6.500h3v3.500h-3z" fill="#fff" stroke="none" />
      </Glyph>
    ),
  },
  {
    key: 'store', icon: (
      <Glyph $w={29} $h={28} $ml={-2}>
        <path d="M9.500 7V4c0-6 10-6 10 0v3M12 6V4c0-3 5-3 5 0v2" stroke="#c9d0d6" strokeWidth="1.500" />
        <path d="M0 6h29v20q0 2-2 2H2q-2 0-2-2z" fill="#fff" />
        <path d="M8 10.500h6V16H8z" fill="#f25022" /><path d="M15 10.500h6V16h-6z" fill="#7fba00" />
        <path d="M8 17h6v5.500H8z" fill="#00a4ef" /><path d="M15 17h6v5.500h-6z" fill="#ffb900" />
      </Glyph>
    ),
  },
  {
    key: 'mail', icon: (
      <Glyph $w={30} $h={25} $mt={-1}><path d="M0 8L15 0l15 8v17H0z" fill="#fff" /><path d="M1 9h28l-12 6.500 7 5.500L1 9z" fill="#0c2034" /></Glyph>
    ),
  },
  {
    key: 'sticky', icon: (
      <Glyph $w={24} $h={24}><path d="M0 0h23.500v12.500L13 24H0z" fill="#ffe600" /><path d="M12.500 13h10L12.500 24z" fill="#2a2500" /><path d="M14 24l9.500-10.500V24z" fill="#fff04d" /></Glyph>
    ),
  },
  {
    key: 'explorer', on: true, icon: (
      <Glyph $w={28} $h={24}>
        <path d="M0 0h10l3 3v5H0z" fill="#d99a1c" /><path d="M0 5h11l3-3h14v21H0z" fill="#fbd36b" /><path d="M0 20h28v3H0z" fill="#e8b548" />
        <path d="M5 24V14q0-2 2-2h14q2 0 2 2v10h-4v-7H9v7z" fill="#3d93dc" />
      </Glyph>
    ),
  },
  {
    key: 'edge', icon: (
      <Glyph $w={24} $h={27}>
        <path fillRule="evenodd" d="M0 12C1 4 6 0 12.500 0 20 0 24 5.500 24 12v3.500H8.500c.3 4 3.500 6 7.500 6 2.600 0 5-.7 7-2v5.500c-2.500 1.400-5.400 2-8.500 2C7 27 3 22 3.200 16.500 3.400 12.500 5.500 9.500 9 8c-3.500.4-6.500 1.600-9 4zM8.700 10.500h8.600c0-3-1.300-4.600-4-4.600-2.600 0-4.200 1.800-4.600 4.600z" fill="#0078d7" />
      </Glyph>
    ),
  },
  {
    key: 'chrome', stacked: 40, icon: (
      <Glyph $w={28} $h={28}>
        <circle cx="14" cy="14" r="13.800" fill="#fdd03b" />
        <path d="M2.050 7.100A13.800 13.800 0 0014 27.800L20 17.500 8 17.500z" fill="#2aa24c" />
        <path d="M2.050 7.100A13.800 13.800 0 0126.200 7.700H14L8 17.500z" fill="#d8453b" />
        <circle cx="14" cy="14" r="6.400" fill="#fff" /><circle cx="14" cy="14" r="5" fill="#4a8af4" />
      </Glyph>
    ),
  },
  {
    key: 'word', active: true, stacked: 56, icon: (
      <Glyph $w={27} $h={27} $ml={-2}>
        <path d="M14 4h12.500v19H14z" fill="#fff" />
        <path d="M15 7h9M15 10.200h9M15 13.400h9M15 16.600h9M15 19.800h9" stroke="#2b579a" strokeWidth="1.500" />
        <path d="M0 3L16 0v27L0 24z" fill="#2b579a" />
        <text x="2.500" y="18" fontSize="13" fontWeight="700" fill="#fff" textLength="11" lengthAdjust="spacingAndGlyphs">W</text>
      </Glyph>
    ),
  },
  {
    key: 'acrobat', on: true, icon: (
      <Glyph $w={27} $h={27} $mt={-2}>
        <defs><linearGradient id="pdf" x1="0" y1="0" x2="0" y2="1"><stop offset="0" stopColor="#f40b0b" /><stop offset="1" stopColor="#7c0505" /></linearGradient></defs>
        <path d="M0 0h27v27H0z" fill="url(#pdf)" />
        <path d="M12.300 5.500c2-1.500 2 2 1.200 5C12 16 8 22 6.500 21c-1.200-1 2-4 7.500-5 5-1 8-.5 7.500 1-.7 1.500-5-.5-7.500-4.500-2-3-2.500-6-1.700-7z" stroke="#fff" strokeWidth="1.400" />
      </Glyph>
    ),
  },
  {
    key: 'notepad', on: true, icon: (
      <Glyph $w={28} $h={28}>
        <defs><linearGradient id="note" x1="0" y1="0" x2="1" y2="1"><stop offset="0" stopColor="#d9f1f5" /><stop offset="1" stopColor="#4fa0b3" /></linearGradient></defs>
        <path d="M24 2l3 22-5 2z" fill="#b08a52" /><path d="M9 1l16 2-5 24-3-1z" fill="#e9eef0" /><path d="M9 1l15 2-6 22L0 21z" fill="url(#note)" />
        <path d="M9.500 1.500l15 2" stroke="#8b8f91" strokeWidth="2" strokeDasharray="1.500 1" />
      </Glyph>
    ),
  },
  {
    key: 'whatsapp', on: true, icon: (
      <Glyph $w={27} $h={28}>
        <path d="M0 28l2-7.500A13.300 13.300 0 1113.500 27c-2.300 0-4.500-.5-6.500-1.500z" fill="#fff" />
        <path d="M2.800 25l1.300-5A11.200 11.200 0 1113.500 25c-2.100 0-4-.5-5.800-1.500z" fill="#25c043" />
        <path d="M8 8c1-1.500 2.500-1 3 .5l.7 1.800c0 1-1.200 1.500-1 2.200 1 2 2.500 3.500 5 4.500" stroke="#fff" strokeWidth="2.400" />
        <circle cx="20.500" cy="20.500" r="9.700" fill="#f00505" />
        <text x="13.200" y="26" fontSize="15" fill="#fff" textLength="14.500" lengthAdjust="spacingAndGlyphs">10</text>
      </Glyph>
    ),
  },
];

const tabs = [
  ['File', 21, 25], ['Home', 36, 48], ['Insert', 26, 43], ['Design', 27, 52], ['Layout', 27, 51], ['References', 29, 82],
  ['Mailings', 28, 63], ['Review', 29, 53], ['View', 28, 36], ['Help', 28, 35],
];

export default function App() {
  return (
    <Screen>
      <Global />
      <TitleBar>
        <Foliage width="600" height="40" viewBox="1320 0 600 40" fill="#254b88">
          <path d="M1352 17q-10 6-10 14l-5 3 9 2 3 3 9-1-4-4 1-9z" />
          <path d="M1417 4q-3 8 0 14l-3 3 3 3-1 10 8-10 16-1-4-4-10 2z" />
          <path d="M1435 31q8-1 12 3l8-5q-2 6-2 10h-14zM1513 37q4-2 7-1l5-6q5 4 2 7l10 1-3 3h-20z" />
          <path d="M1652 18q10-12 24-8 12 2 14 14-2 12-14 16-4-6-2-16-8-6-22-6z" />
          {leaves.map((l) => <path key={l.join()} d={leafPath(l)} />)}
          <g fill="none" stroke="#254b88" strokeWidth="1.500">
            <path d="M1553 23q40 6 60-6t70 2M1688 12l10-6 2-6M1700 38q20-12 44-20 20 6 42 10h74q30-2 58-12M1690 0q14 14 50 20M1833 13q8 4 4 14M1811 28q-6 10-12 12" />
          </g>
        </Foliage>
        <Glyph $w={20} $h={20} $ml={26} $mt={3} stroke="#fff" strokeWidth="1.500"><path d="M1 1h18v18H1zM4.500 1v8h11V1M5.500 19v-6h9v6M8.500 19v-3" /></Glyph>
        <Glyph $w={18} $h={21} $ml={18} $mt={1} stroke="#fff" strokeWidth="1.700"><path d="M1 1v8h8M1 8.500C6-1 18-1 17.500 7.500 17.500 12 13 15 7 20.500" /></Glyph>
        <Caret ml={7} mt={-4} color="#fff" />
        <Glyph $w={20} $h={20} $ml={12} $mt={3} stroke="#fff" strokeWidth="1.700"><path d="M1 1h7.500v7M8 1.500C-2 6-1 19 10 19c10.500 0 12-12 5-17" /></Glyph>
        <Glyph $w={7} $h={7} $ml={22}><path d="M1 .7h5" stroke="#fff" strokeWidth="1.400" /><path d="M.5 3h6l-3 3.500z" fill="#fff" /></Glyph>
        <Fit w={135} ml={735} mt={-2} size={14.5}>{'Document1  -  Word'}</Fit>
        <Fit w={93} ml={563} mt={1} size={14.5}>Nikita Vispute</Fit>
        <Glyph $w={15} $h={12} $ml={29} stroke="#fff" strokeWidth="1.200"><path d="M.5.500h14v11.500H.5zM.5 3h14M7.500 12V5M4.500 8l3-3 3 3" /></Glyph>
        <Glyph $w={12} $h={2} $ml={44} $mt={-1}><path d="M0 1h12" stroke="#fff" /></Glyph>
        <Glyph $w={12} $h={12} $ml={45} stroke="#fff" strokeWidth="1.200"><path d="M.5 3h8.500v8.500H.5zM3 3V.5h8.500V9H9" /></Glyph>
        <Glyph $w={12} $h={12} $ml={45} stroke="#fff" strokeWidth="1.200"><path d="M0 0l12 12M12 0L0 12" /></Glyph>
      </TitleBar>

      <TabBar>
        {tabs.map(([name, ml, w]) => (
          <Tab key={name} $ml={ml} $active={name === 'Home'}>
            <Fit w={w} size={16.8} weight={name === 'Home' ? 700 : 400}>{name}</Fit>
          </Tab>
        ))}
        <Glyph $w={18} $h={18} $ml={30} stroke="#555" strokeWidth="1.400"><circle cx="11.500" cy="6.500" r="5.800" /><path d="M7.500 11L.5 17.500" /></Glyph>
        <Fit w={219} ml={12} mt={1} size={16.8}>Tell me what you want to do</Fit>
        <ActionButton $w={85} $ml={639}>
          <Glyph $w={14} $h={15} $ml={9} stroke="#2b579a" strokeWidth="1.300"><path d="M3 5H.7v9.300h11.500V9.500M3.500 10c0-4 2-6 6-6.200V1l4 4-4 4V6.500c-3 0-4.500 1-6 3.500z" /></Glyph>
          <Fit w={44} ml={7} mt={1} size={16} weight={700} color="#2b579a">Share</Fit>
        </ActionButton>
        <ActionButton $w={125} $ml={10}>
          <Glyph $w={14} $h={13} $ml={10} stroke="#2b579a" strokeWidth="1.300"><path d="M.7.700h12.600v8.300H6l-3 3V9H.7z" /></Glyph>
          <Fit w={85} ml={5} mt={1} size={16} weight={700} color="#2b579a">Comments</Fit>
        </ActionButton>
      </TabBar>

      <Ribbon>
        <Clipboard />
        <FontGroup />
        <Paragraph />
        <Styles />
        <Editing />
        <Voice />
        <Group $w={52} $last>
          <GroupBody />
          <GroupFooter><Glyph $w={11} $h={6} $ml={30} stroke="#555" strokeWidth="1.800"><path d="M.5 5.500l5-4.500 5 4.500" /></Glyph></GroupFooter>
        </Group>
      </Ribbon>

      <Workspace>
        <LeftGutter>
          <TabSelector><TabSelectorFace><Glyph $w={8} $h={8}><path d="M1 0v7h7" stroke="#666" strokeWidth="2" /></Glyph></TabSelectorFace></TabSelector>
          <VerticalRuler />
        </LeftGutter>
        <Canvas>
          <HorizontalRuler />
          <Page><ResultsTable /></Page>
        </Canvas>
        <Scrollbar>
          <ScrollButton><Glyph $w={10} $h={5}><path d="M0 5h10L5 0z" fill="#666" /></Glyph></ScrollButton>
          <ScrollThumb />
          <ScrollButton><Glyph $w={10} $h={5}><path d="M0 0h10L5 5z" fill="#666" /></Glyph></ScrollButton>
        </Scrollbar>
      </Workspace>

      <StatusBar>
        <Fit w={67} ml={8} mt={2} size={12.8}>Page 1 of 1</Fit>
        <Fit w={54} ml={20} mt={2} size={12.8}>93 words</Fit>
        <Glyph $w={18} $h={15} $ml={20} $mt={-3} stroke="#666" strokeWidth="1.200"><path d="M9 2v13M9 2L7 1H.6v12H7l2 1.500L11 13h6v-2.500M9 2l2-1h6v2" /><path d="M11 7l2.500 3L18 4" strokeWidth="2" /></Glyph>
        <Push />
        <Glyph $w={17} $h={15} $mt={-1} stroke="#666" strokeWidth="1.200"><path d="M8.500 1.500L7 .6H.6v12.500H7l1.500 1.300L10 13.100h6.400V.6H10zM8.500 1v14M2.500 3.500h4M2.500 6h4M2.500 8.500h4M2.500 11h4M10.500 3.500h4M10.500 6h4M10.500 8.500h4M10.500 11h4" /></Glyph>
        <ViewButton><Glyph $w={17} $h={16} stroke="#555" strokeWidth="1.200"><path d="M.6.600h15.800v14.800H.6zM3 4h11M3 6.700h11M3 9.400h11M3 12h11" /></Glyph></ViewButton>
        <Glyph $w={17} $h={15} $ml={13} stroke="#666" strokeWidth="1.200"><path d="M8 12.500H.6V.6h12.800v5M3 3.500h8M3 6h8M3 8.500h4" /><circle cx="12.500" cy="10.500" r="4.500" fill="#777" stroke="none" /><path d="M10 8.500l2 1v2l-1.500 1M14 8l1.500 2-1 1.500" stroke="#f3f2f1" /></Glyph>
        <Glyph $w={10} $h={2} $ml={17} $mt={-1}><path d="M0 1h10" stroke="#666" strokeWidth="2" /></Glyph>
        <Glyph $w={125} $h={14} $ml={4}><path d="M0 7.500h125" stroke="#a6a4a2" /><path d="M61 0h6v14h-6z" fill="#666" /></Glyph>
        <Glyph $w={10} $h={10} $ml={4}><path d="M0 5h10M5 0v10" stroke="#666" strokeWidth="2" /></Glyph>
        <Fit w={32} ml={13} mt={2} size={12.8}>110%</Fit>
        <Glyph $w={8} $h={1} />
      </StatusBar>

      <Taskbar>
        <StartButton>
          <Glyph $w={20} $h={20}><path d="M0 3l8.500-1.200v7.700H0zM9.500 1.600L20 0v9.500H9.500zM0 10.500h8.500v7.700L0 17zM9.500 10.500H20V20L9.500 18.400z" fill="#fff" /></Glyph>
        </StartButton>
        <SearchBox>
          <Glyph $w={20} $h={20} $ml={14} stroke="#222" strokeWidth="1.600"><circle cx="12.500" cy="7" r="6.300" /><path d="M8 11.500L.5 19.500" /></Glyph>
          <Fit w={165} ml={16} mt={2} size={18}>Type here to search</Fit>
        </SearchBox>
        {tiles.map((t) => (
          <TaskTile key={t.key} $w={t.w}>
            <TileFace $active={t.active}>{t.icon}</TileFace>
            <Indicator $on={t.on} $active={t.active} $stacked={t.stacked} />
          </TaskTile>
        ))}
        <Push />
        <Glyph $w={16} $h={9} stroke="#fff" strokeWidth="1.500"><path d="M.5 8.500L8 1l7.500 7.500" /></Glyph>
        <Glyph $w={20} $h={14} $ml={12} stroke="#fff" strokeWidth="1.300"><path d="M6.500 3.500H18v9.500H4.500V9M18.500 6.500h1.500v4h-1.500M1.500 0v2.500M4.500 0v2.500M0 2.500h6v2q0 2-2 2.500H2q-2-.5-2-2.500zM3 7v4" /></Glyph>
        <Glyph $w={16} $h={15} $ml={13} stroke="#d4dae2" strokeWidth="1.300"><path d="M1 14A13 13 0 0115 1M4.500 14.500A10 10 0 0115 4.500M8 14.500A6.500 6.500 0 0115 8" /><circle cx="13.500" cy="13" r="1.700" fill="#fff" stroke="none" /></Glyph>
        <Glyph $w={20} $h={16} $ml={11} stroke="#fff" strokeWidth="1.300"><path d="M.7 5h3L8 1v14l-4.300-4h-3zM11 5.500q1.500 2.500 0 5" /><path d="M14 3.500q3 4.500 0 9M17 1q4.500 7 0 14" stroke="#7f8896" /></Glyph>
        <Clock>
          <Fit w={37} mt={1} size={15}>16:00</Fit>
          <Fit w={72} size={15}>29-Nov-19</Fit>
        </Clock>
        <Glyph $w={32} $h={31} $ml={22} $mt={6}>
          <path d="M0 0h20v17H11l-4 4v-4H0z" fill="#fff" />
          <path d="M4 4.500h12M4 8.500h12M4 12.500h8" stroke="#1b2236" strokeWidth="1.300" />
          <circle cx="19.500" cy="19.500" r="10" fill="#0f3a66" stroke="#7d93aa" strokeWidth="1.300" />
          <text x="16" y="25" fontSize="14.500" fill="#fff">1</text>
        </Glyph>
        <ShowDesktop />
      </Taskbar>
    </Screen>
  );
}
